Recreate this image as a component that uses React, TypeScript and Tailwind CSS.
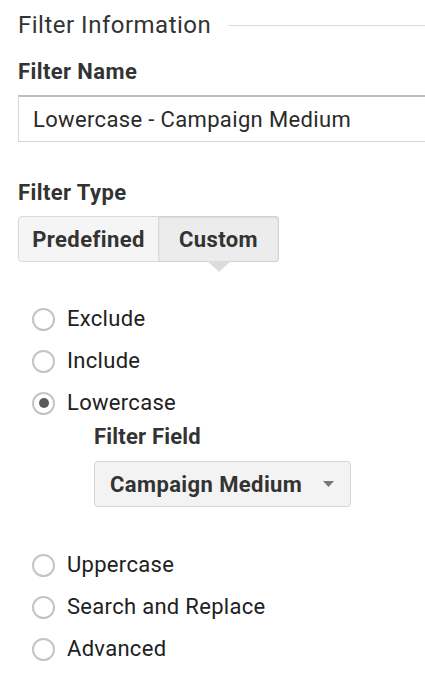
const options = ["Exclude", "Include", "Lowercase"];
const moreOptions = ["Uppercase", "Search and Replace", "Advanced"];

function Radio({ label, checked }: { label: string; checked?: boolean }) {
  return (
    <div className="flex h-[42px] items-center">
      <span className="flex h-[23px] w-[23px] items-center justify-center rounded-full border-2 border-[#c4c4c4] bg-white">
        {checked && <span className="h-[10px] w-[10px] rounded-full bg-[#5a5a5a]" />}
      </span>
      <span className="ml-[12px] text-[22px] leading-6 tracking-[0.3px] text-[#212121]">{label}</span>
    </div>
  );
}

export default function App() {
  return (
    <div
      className="h-[681px] w-[425px] overflow-hidden bg-white pl-[18px] pt-[13px]"
      style={{ fontFamily: "Roboto, 'Liberation Sans', sans-serif" }}
    >
      {/* Section heading */}
      <div className="flex items-center">
        <h2 className="text-[24px] leading-6 tracking-[0.5px] text-[#333]">Filter Information</h2>
        <div className="ml-[17px] h-px flex-1 bg-[#dcdcdc]" />
      </div>

      <div className="mt-[23px] text-[22px] font-bold leading-6 tracking-[0.4px] text-[#333]">Filter Name</div>
      <div className="mt-[11px] flex h-[47px] w-[440px] items-center border border-t-2 border-[#d6d6d6] border-t-[#bdbdbd] pl-[14px] text-[22px] tracking-[0.35px] text-[#2a2a2a]">
        Lowercase - Campaign Medium
      </div>

      <div className="mt-[39px] text-[22px] font-bold leading-6 tracking-[0.4px] text-[#333]">Filter Type</div>
      <div className="relative mt-[11px] flex h-[46px] w-fit">
        <button className="w-[141px] rounded-l-sm border border-[#d9d9d9] bg-[#f5f5f5] text-[22px] font-bold tracking-[0.4px] text-[#333]">
          Predefined
        </button>
        <button className="w-[120px] rounded-r-sm border border-l-0 border-[#d0d0d0] bg-[#ececec] text-[22px] font-bold tracking-[0.4px] text-[#333] shadow-[inset_0_1px_2px_rgba(0,0,0,0.08)]">
          Custom
        </button>
        <span className="absolute left-[189px] top-[45px] h-0 w-0 border-x-[12px] border-t-[11px] border-x-transparent border-t-[#dcdcdc]" />
      </div>

      <div className="mt-[36px] pl-[14px]">
        {options.map((o) => (
          <Radio key={o} label={o} checked={o === "Lowercase"} />
        ))}
      </div>

      <div className="ml-[76px] mt-px">
        <div className="text-[22px] font-bold leading-6 tracking-[0.2px] text-[#333]">Filter Field</div>
        <div className="mt-[12px] flex h-[46px] w-[257px] items-center justify-between rounded-sm border border-[#d4d4d4] bg-[#f3f3f3] pl-[15px] pr-[16px]">
          <span className="text-[22px] font-bold tracking-[0.4px] text-[#333]">Campaign Medium</span>
          <svg width="11" height="6" viewBox="0 0 11 6" className="fill-[#777]">
            <path d="M0 0h11L5.5 6z" />
          </svg>
        </div>
      </div>

      <div className="mt-[37px] pl-[14px]">
        {moreOptions.map((o) => (
          <Radio key={o} label={o} />
        ))}
      </div>
    </div>
  );
}
